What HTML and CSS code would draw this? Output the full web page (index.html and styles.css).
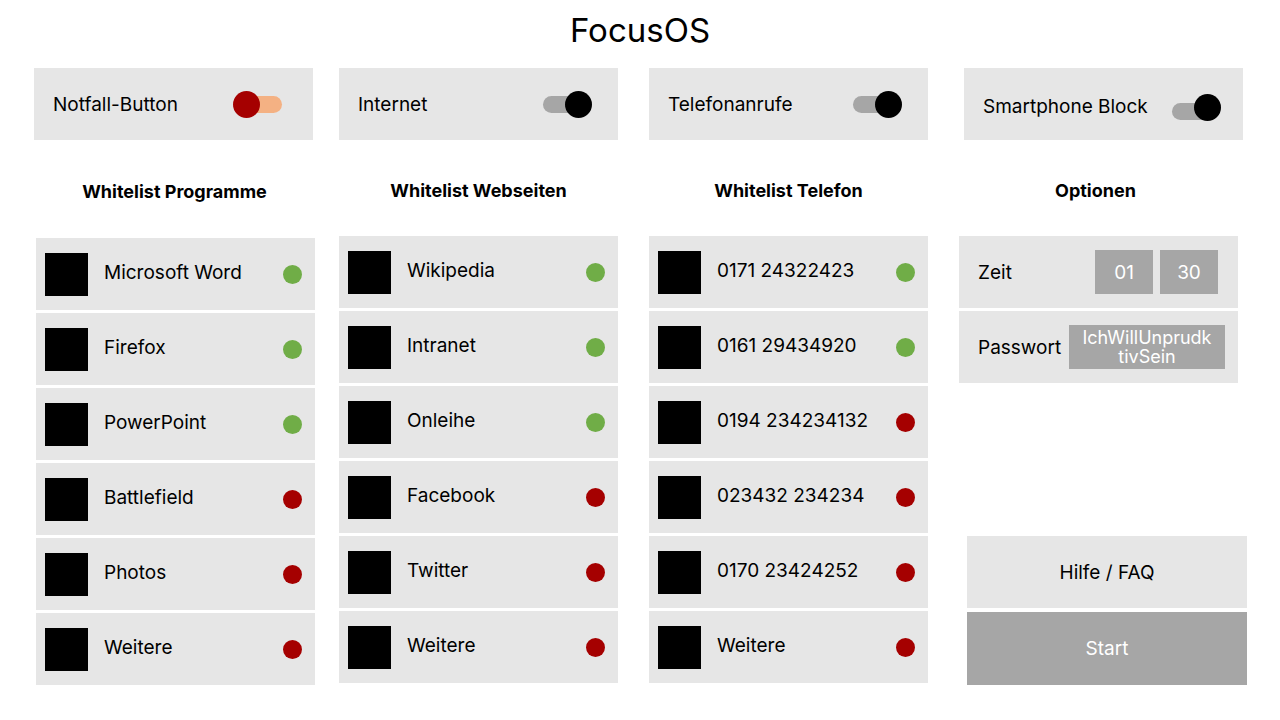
FILE: index.html
```html
<!DOCTYPE html>
<html lang="de">
<head>
    <meta charset="UTF-8">
    <meta name="viewport" content="width=device-width, initial-scale=1.0">
    <title>FocusOS</title>
    <link rel="stylesheet" href="styles.css">
</head>
<body>
    <h1 class="title">FocusOS</h1>

    <div class="columns">
        <!-- Programme -->
        <div class="col col-programs">
            <div class="toggle-card emergency">
                <span>Notfall-Button</span>
                <span class="switch off"><span class="track"></span><span class="knob"></span></span>
            </div>
            <h3 class="col-head">Whitelist Programme</h3>
            <div class="list">
                <div class="item"><span class="icon"></span><span class="name">Microsoft Word</span><span class="dot ok"></span></div>
                <div class="item"><span class="icon"></span><span class="name">Firefox</span><span class="dot ok"></span></div>
                <div class="item"><span class="icon"></span><span class="name">PowerPoint</span><span class="dot ok"></span></div>
                <div class="item"><span class="icon"></span><span class="name">Battlefield</span><span class="dot no"></span></div>
                <div class="item"><span class="icon"></span><span class="name">Photos</span><span class="dot no"></span></div>
                <div class="item"><span class="icon"></span><span class="name">Weitere</span><span class="dot no"></span></div>
            </div>
        </div>

        <!-- Webseiten -->
        <div class="col">
            <div class="toggle-card">
                <span>Internet</span>
                <span class="switch on"><span class="track"></span><span class="knob"></span></span>
            </div>
            <h3 class="col-head">Whitelist Webseiten</h3>
            <div class="list">
                <div class="item"><span class="icon"></span><span class="name">Wikipedia</span><span class="dot ok"></span></div>
                <div class="item"><span class="icon"></span><span class="name">Intranet</span><span class="dot ok"></span></div>
                <div class="item"><span class="icon"></span><span class="name">Onleihe</span><span class="dot ok"></span></div>
                <div class="item"><span class="icon"></span><span class="name">Facebook</span><span class="dot no"></span></div>
                <div class="item"><span class="icon"></span><span class="name">Twitter</span><span class="dot no"></span></div>
                <div class="item"><span class="icon"></span><span class="name">Weitere</span><span class="dot no"></span></div>
            </div>
        </div>

        <!-- Telefon -->
        <div class="col">
            <div class="toggle-card">
                <span>Telefonanrufe</span>
                <span class="switch on"><span class="track"></span><span class="knob"></span></span>
            </div>
            <h3 class="col-head">Whitelist Telefon</h3>
            <div class="list">
                <div class="item"><span class="icon"></span><span class="name">0171 24322423</span><span class="dot ok"></span></div>
                <div class="item"><span class="icon"></span><span class="name">0161 29434920</span><span class="dot ok"></span></div>
                <div class="item"><span class="icon"></span><span class="name">0194 234234132</span><span class="dot no"></span></div>
                <div class="item"><span class="icon"></span><span class="name">023432 234234</span><span class="dot no"></span></div>
                <div class="item"><span class="icon"></span><span class="name">0170 23424252</span><span class="dot no"></span></div>
                <div class="item"><span class="icon"></span><span class="name">Weitere</span><span class="dot no"></span></div>
            </div>
        </div>

        <!-- Optionen -->
        <div class="col col-options">
            <div class="toggle-card smartphone">
                <span>Smartphone Block</span>
                <span class="switch on"><span class="track"></span><span class="knob"></span></span>
            </div>
            <h3 class="col-head">Optionen</h3>
            <div class="options">
                <div class="opt-row">
                    <span>Zeit</span>
                    <div class="time">
                        <span class="field">01</span>
                        <span class="field">30</span>
                    </div>
                </div>
                <div class="opt-row pw-row">
                    <span>Passwort</span>
                    <span class="field pw">IchWillUnprudktivSein</span>
                </div>
            </div>
            <div class="actions">
                <button class="btn help">Hilfe / FAQ</button>
                <button class="btn start">Start</button>
            </div>
        </div>
    </div>
</body>
</html>
```

FILE: styles.css
```css
body {
    font-family: Inter, "Noto Sans", sans-serif;
    margin: 0;
    padding: 0;
    background: #fff;
    color: #000;
    width: 1280px;
    height: 720px;
}

.title {
    font-size: 33px;
    font-weight: 400;
    text-align: center;
    margin: 0;
    padding-top: 11px;
    height: 57px;
    line-height: 38px;
    box-sizing: border-box;
}

.columns {
    display: flex;
    align-items: stretch;
    padding-left: 34px;
    margin-top: 11px;
    gap: 26px;
}

.col {
    width: 279px;
    display: flex;
    flex-direction: column;
}

.col-programs {
    width: 281px;
    margin-right: -2px;
}

.col-programs .list {
    margin-left: 2px;
    margin-top: 2px;
}

.col-programs .col-head {
    padding-top: 7px;
}

.col + .col {
    margin-left: 5px;
}

.col-programs + .col {
    margin-left: 0;
}

.col-options {
    width: 288px;
}

.col-options .col-head {
    width: 273px;
}

.toggle-card {
    background: #e6e6e6;
    height: 72px;
    width: 279px;
    box-sizing: border-box;
    display: flex;
    align-items: center;
    justify-content: space-between;
    padding: 0 26px 0 19px;
    font-size: 19px;
}

.toggle-card.emergency {
    padding-right: 31px;
}

.toggle-card.smartphone {
    margin-left: 5px;
    padding-right: 22px;
}

.toggle-card.smartphone span:first-child {
    margin-top: 4px;
}

.toggle-card.smartphone .switch {
    margin-top: 6px;
}

.switch {
    position: relative;
    width: 49px;
    height: 27px;
}

.switch .track {
    position: absolute;
    top: 5px;
    height: 17px;
    border-radius: 9px;
}

.switch .knob {
    position: absolute;
    top: 0;
    width: 27px;
    height: 27px;
    border-radius: 50%;
}

.switch.off .track {
    left: 8px;
    right: 0;
    background: #f4b183;
}

.switch.off .knob {
    left: 0;
    background: #a50000;
}

.switch.on .track {
    left: 0;
    right: 8px;
    background: #a6a6a6;
}

.switch.on .knob {
    right: 0;
    background: #000;
}

.col-head {
    height: 96px;
    margin: 0;
    font-size: 18px;
    font-weight: 700;
    display: flex;
    align-items: center;
    justify-content: center;
    padding-top: 4px;
    box-sizing: border-box;
}

.list {
    display: flex;
    flex-direction: column;
    gap: 3px;
}

.item {
    background: #e6e6e6;
    height: 72px;
    display: flex;
    align-items: center;
    padding: 0 13px 0 9px;
    font-size: 19px;
}

.icon {
    width: 43px;
    height: 43px;
    background: #000;
    margin-right: 16px;
}

.name {
    flex: 1;
    margin-top: -4px;
}

.dot {
    width: 19px;
    height: 19px;
    border-radius: 50%;
}

.dot.ok {
    background: #70ad47;
}

.dot.no {
    background: #a50000;
}

.options {
    display: flex;
    flex-direction: column;
    gap: 3px;
    width: 279px;
}

.opt-row {
    background: #e6e6e6;
    height: 72px;
    display: flex;
    align-items: center;
    justify-content: space-between;
    padding: 0 20px 0 19px;
    font-size: 19px;
}

.pw-row {
    padding-right: 13px;
}

.time {
    display: flex;
    gap: 7px;
}

.field {
    background: #a6a6a6;
    color: #fff;
    height: 44px;
    width: 58px;
    display: flex;
    align-items: center;
    justify-content: center;
}

.field.pw {
    width: 156px;
    box-sizing: border-box;
    padding: 0 12px;
    font-size: 18px;
    line-height: 19px;
    text-align: center;
    word-break: break-all;
}

.actions {
    margin-top: auto;
    margin-left: 8px;
    display: flex;
    flex-direction: column;
    gap: 4px;
}

.btn {
    border: none;
    height: 72px;
    width: 280px;
    font-family: inherit;
    font-size: 19px;
    padding: 0;
}

.btn.help {
    background: #e6e6e6;
    color: #000;
}

.btn.start {
    background: #a6a6a6;
    color: #fff;
    height: 73px;
}
```
